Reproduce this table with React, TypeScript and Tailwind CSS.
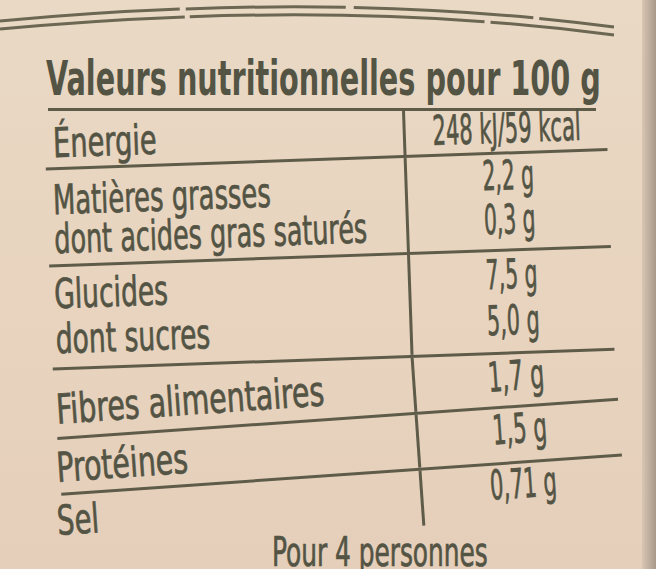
import React from 'react';

type Cell = { text: string; sx: string };
type Row = {
  h: string;
  lp: string;
  rp: string;
  lh: string;
  vh: string;
  labels: Cell[];
  values: Cell[];
};

const rows: Row[] = [
  {
    h: 'h-[47px]', lp: 'pt-[3px] pl-[8px]', rp: 'pt-[4px]', lh: 'h-[40px]', vh: 'h-[40px]',
    labels: [{ text: 'Énergie', sx: 'scale-x-[0.74]' }],
    values: [{ text: '248 kJ/59 kcal', sx: 'scale-x-[0.57]' }],
  },
  {
    h: 'h-[97px]', lp: 'pt-[13px] pl-[6px]', rp: 'pt-[4px]', lh: 'h-[39px]', vh: 'h-[44px]',
    labels: [
      { text: 'Matières grasses', sx: 'scale-x-[0.7]' },
      { text: 'dont acides gras saturés', sx: 'scale-x-[0.69]' },
    ],
    values: [
      { text: '2,2 g', sx: 'scale-x-[0.55]' },
      { text: '0,3 g', sx: 'scale-x-[0.55]' },
    ],
  },
  {
    h: 'h-[103px]', lp: 'pt-[10px] pl-[4px]', rp: 'pt-[6px]', lh: 'h-[45px]', vh: 'h-[46px]',
    labels: [
      { text: 'Glucides', sx: 'scale-x-[0.72]' },
      { text: 'dont sucres', sx: 'scale-x-[0.72]' },
    ],
    values: [
      { text: '7,5 g', sx: 'scale-x-[0.55]' },
      { text: '5,0 g', sx: 'scale-x-[0.56]' },
    ],
  },
  {
    h: 'h-[57px]', lp: 'pt-[10px] pl-[1px]', rp: 'pt-[8px]', lh: 'h-[40px]', vh: 'h-[40px]',
    labels: [{ text: 'Fibres alimentaires', sx: 'scale-x-[0.77]' }],
    values: [{ text: '1,7 g', sx: 'scale-x-[0.6]' }],
  },
  {
    h: 'h-[56px]', lp: 'pt-[11px] -ml-[3px]', rp: 'pt-[4px]', lh: 'h-[35px]', vh: 'h-[40px]',
    labels: [{ text: 'Protéines', sx: 'scale-x-[0.77]' }],
    values: [{ text: '1,5 g', sx: 'scale-x-[0.58]' }],
  },
  {
    h: 'h-[55px]', lp: 'pt-[8px] -ml-[6px]', rp: 'pt-[3px]', lh: 'h-[36px]', vh: 'h-[40px]',
    labels: [{ text: 'Sel', sx: 'scale-x-[0.74]' }],
    values: [{ text: '0,71 g', sx: 'scale-x-[0.57]' }],
  },
];

const font = "font-['DejaVu_Sans_Condensed','DejaVu_Sans',sans-serif]";
const ink = 'border-[#5e5c49]';
const textCls = 'text-[41px] leading-[35px] [-webkit-text-stroke:0.7px_#535444]';

const TableRow: React.FC<{ row: Row; last: boolean }> = ({ row, last }) => (
  <div className={`grid grid-cols-[361px_201px] ${row.h} ${last ? '' : `border-b-[3px] ${ink}`}`}>
    <div className={`border-r-[3px] ${ink} whitespace-nowrap`}>
      <div className={row.lp}>
        {row.labels.map((l, i) => (
          <div key={i} className={row.lh}>
            <span className={`inline-block origin-left ${l.sx} ${textCls}`}>{l.text}</span>
          </div>
        ))}
      </div>
    </div>
    <div className={`${row.rp} whitespace-nowrap`}>
      {row.values.map((v, i) => (
        <div key={i} className={`${row.vh} flex justify-center`}>
          <span className={`inline-block origin-center ${v.sx} ${textCls}`}>{v.text}</span>
        </div>
      ))}
    </div>
  </div>
);

const App: React.FC = () => {
  return (
    <div className={`relative w-[656px] h-[569px] overflow-hidden bg-gradient-to-b from-[#e9d9c5] via-[#e8d4bf] to-[#e5cfbb] text-[#535444] ${font}`}>
      {/* curved double rule at the top of the label */}
      <svg className="block" width="656" height="48" viewBox="0 0 656 48">
        <path d="M0 21 Q 335 -10 614 27" fill="none" stroke="#6b6752" strokeWidth="3" strokeDasharray="180 6 160 8 180 6 300" />
        <path d="M0 29 Q 335 -2 614 35" fill="none" stroke="#6b6752" strokeWidth="3" strokeDasharray="185 5 295 6 300" />
      </svg>

      {/* title */}
      <div className="pl-[46px] pt-[6px] h-[60px] whitespace-nowrap">
        <span className="inline-block origin-left scale-x-[0.665] text-[48px] leading-[48px] font-bold">
          Valeurs nutritionnelles pour 100 g
        </span>
      </div>

      {/* top rule of the table */}
      <div className="ml-[48px] w-[548px] h-[3px] bg-[#5e5c49]" />

      {/* rows: the jar's curve tilts them, more towards the bottom */}
      <div className="ml-[44px] w-[562px] origin-[361px_0px] -rotate-2">
        {rows.slice(0, 3).map((row, idx) => (
          <TableRow key={idx} row={row} last={false} />
        ))}
        <div className="origin-[361px_0px] -rotate-2">
          {rows.slice(3).map((row, idx) => (
            <TableRow key={idx} row={row} last={idx === 2} />
          ))}
        </div>
      </div>

      <div className="pl-[272px] pt-[5px] whitespace-nowrap">
        <span className="inline-block origin-left scale-x-[0.69] text-[40px] leading-[42px] [-webkit-text-stroke:0.7px_#535444]">
          Pour 4 personnes
        </span>
      </div>

      {/* darker edge of the jar on the right */}
      <div className="absolute right-0 top-0 h-full w-[14px] bg-gradient-to-r from-[#d9c6b3] to-[#a8998a]" />
    </div>
  );
};

export default App;
